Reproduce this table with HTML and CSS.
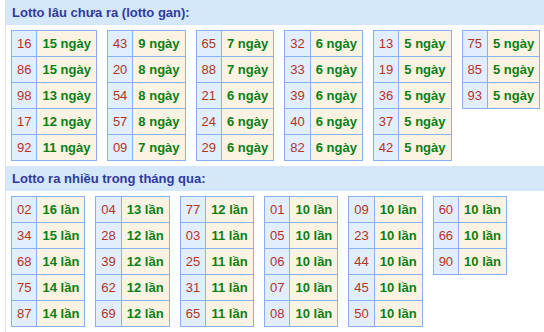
FILE: index.html
```html
<!DOCTYPE html>
<html>
<head>
<meta charset="utf-8">
<link rel="stylesheet" href="styles.css">
</head>
<body>
<div class="page">
  <div class="title">Lotto lâu chưa ra (lotto gan):</div>
  <div class="group">
    <table class="t"><tr><td class="n">16</td><td class="d">15 ngày</td></tr><tr><td class="n">86</td><td class="d">15 ngày</td></tr><tr><td class="n">98</td><td class="d">13 ngày</td></tr><tr><td class="n">17</td><td class="d">12 ngày</td></tr><tr><td class="n">92</td><td class="d">11 ngày</td></tr></table>
    <table class="t"><tr><td class="n">43</td><td class="d">9 ngày</td></tr><tr><td class="n">20</td><td class="d">8 ngày</td></tr><tr><td class="n">54</td><td class="d">8 ngày</td></tr><tr><td class="n">57</td><td class="d">8 ngày</td></tr><tr><td class="n">09</td><td class="d">7 ngày</td></tr></table>
    <table class="t"><tr><td class="n">65</td><td class="d">7 ngày</td></tr><tr><td class="n">88</td><td class="d">7 ngày</td></tr><tr><td class="n">21</td><td class="d">6 ngày</td></tr><tr><td class="n">24</td><td class="d">6 ngày</td></tr><tr><td class="n">29</td><td class="d">6 ngày</td></tr></table>
    <table class="t"><tr><td class="n">32</td><td class="d">6 ngày</td></tr><tr><td class="n">33</td><td class="d">6 ngày</td></tr><tr><td class="n">39</td><td class="d">6 ngày</td></tr><tr><td class="n">40</td><td class="d">6 ngày</td></tr><tr><td class="n">82</td><td class="d">6 ngày</td></tr></table>
    <table class="t"><tr><td class="n">13</td><td class="d">5 ngày</td></tr><tr><td class="n">19</td><td class="d">5 ngày</td></tr><tr><td class="n">36</td><td class="d">5 ngày</td></tr><tr><td class="n">37</td><td class="d">5 ngày</td></tr><tr><td class="n">42</td><td class="d">5 ngày</td></tr></table>
    <table class="t"><tr><td class="n">75</td><td class="d">5 ngày</td></tr><tr><td class="n">85</td><td class="d">5 ngày</td></tr><tr><td class="n">93</td><td class="d">5 ngày</td></tr></table>
  </div>
  <div class="title">Lotto ra nhiều trong tháng qua:</div>
  <div class="group">
    <table class="t"><tr><td class="n">02</td><td class="d">16 lần</td></tr><tr><td class="n">34</td><td class="d">15 lần</td></tr><tr><td class="n">68</td><td class="d">14 lần</td></tr><tr><td class="n">75</td><td class="d">14 lần</td></tr><tr><td class="n">87</td><td class="d">14 lần</td></tr></table>
    <table class="t"><tr><td class="n">04</td><td class="d">13 lần</td></tr><tr><td class="n">28</td><td class="d">12 lần</td></tr><tr><td class="n">39</td><td class="d">12 lần</td></tr><tr><td class="n">62</td><td class="d">12 lần</td></tr><tr><td class="n">69</td><td class="d">12 lần</td></tr></table>
    <table class="t"><tr><td class="n">77</td><td class="d">12 lần</td></tr><tr><td class="n">03</td><td class="d">11 lần</td></tr><tr><td class="n">25</td><td class="d">11 lần</td></tr><tr><td class="n">31</td><td class="d">11 lần</td></tr><tr><td class="n">65</td><td class="d">11 lần</td></tr></table>
    <table class="t"><tr><td class="n">01</td><td class="d">10 lần</td></tr><tr><td class="n">05</td><td class="d">10 lần</td></tr><tr><td class="n">06</td><td class="d">10 lần</td></tr><tr><td class="n">07</td><td class="d">10 lần</td></tr><tr><td class="n">08</td><td class="d">10 lần</td></tr></table>
    <table class="t"><tr><td class="n">09</td><td class="d">10 lần</td></tr><tr><td class="n">23</td><td class="d">10 lần</td></tr><tr><td class="n">44</td><td class="d">10 lần</td></tr><tr><td class="n">45</td><td class="d">10 lần</td></tr><tr><td class="n">50</td><td class="d">10 lần</td></tr></table>
    <table class="t"><tr><td class="n">60</td><td class="d">10 lần</td></tr><tr><td class="n">66</td><td class="d">10 lần</td></tr><tr><td class="n">90</td><td class="d">10 lần</td></tr></table>
  </div>
</div>
</body>
</html>
```
FILE: styles.css
```css
html, body {
  margin: 0;
  padding: 0;
  background: #ffffff;
}
body {
  font-family: "Liberation Sans", Arial, sans-serif;
  font-size: 13px;
}
.page {
  margin-left: 5px;
  border-left: 1px solid #e2e2e2;
  min-height: 332px;
}
.title {
  background: #d5e7fb;
  color: #2f3b9c;
  font-weight: bold;
  font-size: 13px;
  height: 25px;
  line-height: 25px;
  padding-left: 6px;
}
.group {
  display: flex;
  align-items: flex-start;
  gap: 10px;
  padding: 5px 0 5px 5px;
}
.t {
  border-collapse: collapse;
  border: 1px solid #89b0f4;
}
.t td {
  border: 1px solid #89b0f4;
  height: 25px;
  padding: 0 5px;
  text-align: center;
  white-space: nowrap;
}
.n {
  background: #e2edfd;
  color: #b2341f;
}
.d {
  background: #fdf3e2;
  color: #0a7f16;
  font-weight: bold;
}
```
